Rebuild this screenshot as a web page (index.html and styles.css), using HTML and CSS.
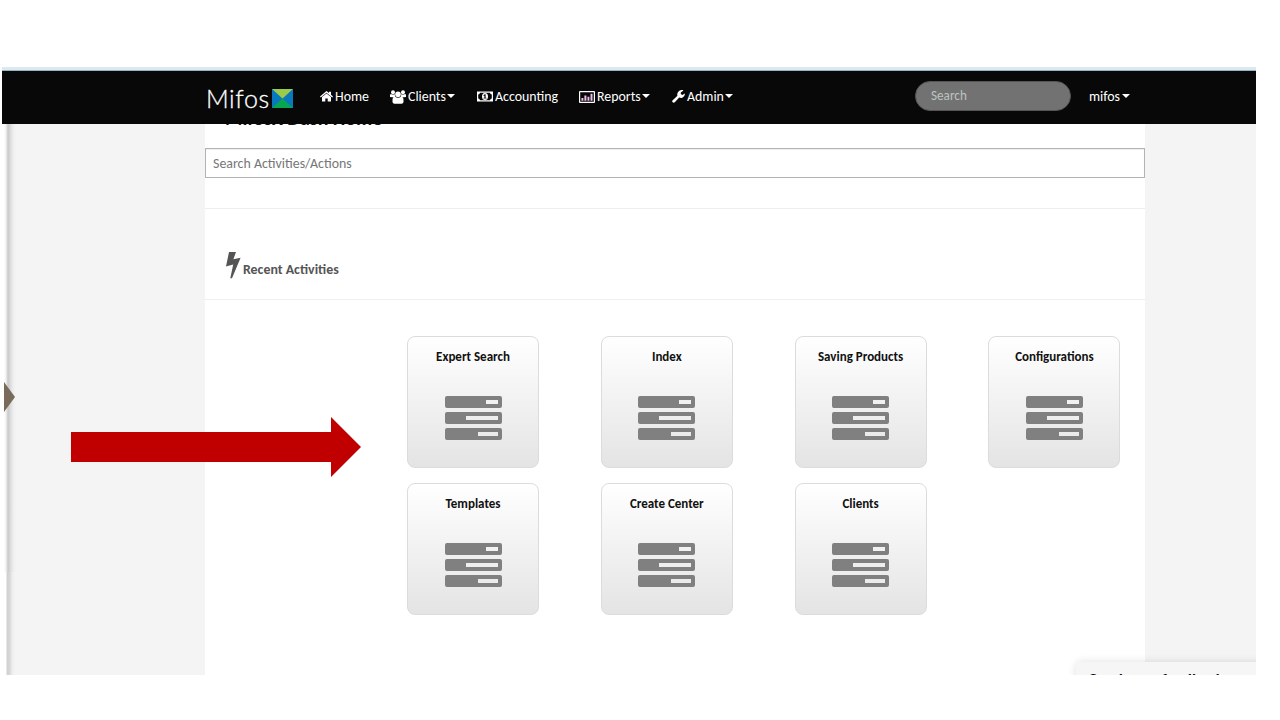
FILE: index.html
```
<!DOCTYPE html>
<html lang="en">
<head>
<meta charset="utf-8">
<title>Mifos X</title>
<link rel="stylesheet" href="styles.css">
</head>
<body>
<svg class="sprite" aria-hidden="true">
  <symbol id="tasks" viewBox="0 0 57 45">
    <path fill-rule="evenodd" d="M2 0H55Q57 0 57 2V10Q57 12 55 12H2Q0 12 0 10V2Q0 0 2 0ZM41 4V8H53V4ZM2 16H55Q57 16 57 18V26Q57 28 55 28H2Q0 28 0 26V18Q0 16 2 16ZM21 20V24H53V20ZM2 32H55Q57 32 57 34V42Q57 44 55 44H2Q0 44 0 42V34Q0 32 2 32ZM33 36V40H53V36Z"/>
  </symbol>
</svg>
<div class="window">
  <nav class="navbar">
    <a class="brand"><span class="brand-name">Mifos</span>
      <svg class="brand-mark" viewBox="0 0 20 18"><path fill="#0879bd" d="M0 0H20V18H0Z"/><path fill="#9ccb4b" d="M0 0H20L10 9Z"/><path fill="#08a651" d="M0 18L10 9L20 18Z"/></svg>
    </a>
    <a class="item home"><svg width="13" height="11" viewBox="0 0 13 11"><path d="M6.5 0L9 2.1V.7H11V3.8L13 5.5L12.2 6.4L6.5 1.8L.8 6.4L0 5.5Z"/><path d="M6.5 2.5L11 6.1V10.5H7.7V7.4H5.3V10.5H2V6.1Z"/></svg><span>Home</span></a>
    <a class="item clients"><svg width="16" height="14" viewBox="0 0 16 14"><circle cx="3" cy="2.2" r="2"/><circle cx="13" cy="2.2" r="2"/><circle cx="8" cy="4.3" r="2.8"/><path d="M0 7V5.2Q0 4 1 4Q3 5 4.7 4Q4.7 6.3 5.8 7.3H2ZM16 7V5.2Q16 4 15 4Q13 5 11.3 4Q11.3 6.3 10.2 7.3H14Z"/><path d="M2.5 12V10Q2.6 6.6 5 6.7Q8 8.8 11 6.7Q13.4 6.6 13.5 10V12Q13.4 13.8 11.5 13.8H4.5Q2.6 13.8 2.5 12Z"/></svg><span>Clients</span><i class="caret"></i></a>
    <a class="item accounting"><svg width="16" height="11" viewBox="0 0 16 11"><path fill-rule="evenodd" d="M0 .5H16V10.5H0ZM3 1.7Q2.8 3.2 1.2 3.4V7.6Q2.8 7.8 3 9.3H13Q13.2 7.8 14.8 7.6V3.4Q13.2 3.2 13 1.7Z"/><path fill-rule="evenodd" d="M8 2A3 3.5 0 0 1 8 9A3 3.5 0 0 1 8 2ZM7.7 3.3L6.3 4.4L6.8 5L7.4 4.7V6.8H6.5V7.6H9.5V6.8H8.6V3.3Z"/></svg><span>Accounting</span></a>
    <a class="item reports"><svg width="16" height="12" viewBox="0 0 16 12"><path fill-rule="evenodd" d="M1 0H15Q16 0 16 1V11Q16 12 15 12H1Q0 12 0 11V1Q0 0 1 0ZM1.2 1.2V10.8H14.8V1.2Z"/><path fill="#edbfe8" d="M2.4 7H4.4V9.7H2.4ZM5.4 4.5H7.4V9.7H5.4ZM8.5 5.8H10.4V9.7H8.5ZM11.5 2.7H13.5V9.7H11.5Z"/></svg><span>Reports</span><i class="caret"></i></a>
    <a class="item admin"><svg width="13" height="13" viewBox="0 0 13 13"><path fill-rule="evenodd" d="M12.8 3.5Q13.2 6.5 10.3 7.7Q8.8 8.2 7.2 7.5L2.8 12.3Q1.8 13.2.7 12.3Q-.4 11.2.7 10.2L5.4 5.8Q4.8 3.4 6.3 1.7Q8.1-.2 11-.1L11.2.8L8.8 2.4V4L10.3 4.9Z"/></svg><span>Admin</span><i class="caret"></i></a>
    <div class="search">Search</div>
    <a class="item user"><span>mifos</span><i class="caret"></i></a>
  </nav>
  <div class="body">
    <main class="content">
      <h1 class="title"><span>MifosX Dash Home</span></h1>
      <div class="filter"><span>Search Activities/Actions</span></div>
      <h2 class="section"><svg width="15" height="27" viewBox="0 0 15 27"><path d="M3 0H10L7.4 7.2L14.6 5.8L6 26.3H4.3L7.2 12.5L0 14.5Z"/></svg><span>Recent Activities</span></h2>
      <div class="cards">
        <a class="card"><span>Expert Search</span><svg><use href="#tasks"/></svg></a>
        <a class="card"><span>Index</span><svg><use href="#tasks"/></svg></a>
        <a class="card"><span>Saving Products</span><svg><use href="#tasks"/></svg></a>
        <a class="card"><span>Configurations</span><svg><use href="#tasks"/></svg></a>
        <a class="card"><span>Templates</span><svg><use href="#tasks"/></svg></a>
        <a class="card"><span>Create Center</span><svg><use href="#tasks"/></svg></a>
        <a class="card"><span>Clients</span><svg><use href="#tasks"/></svg></a>
      </div>
    </main>
    <div class="edge"></div>
    <div class="edge-low"></div>
    <div class="drawer"></div>
    <div class="feedback">Send your feedback</div>
  </div>
</div>
<svg class="pointer" viewBox="0 0 290 60"><path d="M0 15H260V0L290 30L260 60V45H0Z"/></svg>
</body>
</html>
```
FILE: styles.css
```
* { box-sizing: border-box; }
body { margin: 0; width: 1280px; height: 720px; overflow: hidden; background: #fff; font-family: Carlito, Lato, sans-serif; font-size: 13.9px; position: relative; display: flow-root; }
.sprite { display: none; }
.window { width: 1254px; height: 608px; margin: 67px 0 0 2px; overflow: hidden; display: flex; flex-direction: column; border-top: 3px solid #dbe9f2; }
.navbar { height: 54px; flex: none; display: flex; background: #080808; border-top: 1px solid #9ab5c2; padding-left: 205px; color: #fff; position: relative; z-index: 2; }
.brand { width: 113px; display: flex; align-items: flex-start; }
.brand-name { font-family: Lato, sans-serif; font-weight: 300; font-size: 25px; letter-spacing: .6px; line-height: 30px; width: 65px; margin: 12px 1px 0 -1px; white-space: nowrap; -webkit-text-stroke: .3px #fff; }
.brand-mark { width: 21px; height: 19px; margin-top: 18px; }
.item { display: flex; align-items: center; height: 51px; white-space: nowrap; }
.item svg { fill: #fff; flex: none; margin-right: 2px; }
.item span { line-height: 16px; }
.home { width: 70px; }
.clients { width: 87px; }
.accounting { width: 102px; }
.reports { width: 93px; }
.admin { width: 243px; }
.caret { border: 4px solid transparent; border-top-color: #fff; border-bottom: 0; margin: -1px 0 0 1px; }
.user .caret { margin-left: 2px; }
.search { width: 156px; height: 30px; margin: 10px 18px 0 0; border-radius: 15px; border: 1px solid #555; background: #727272; color: #bdc3c3; font-size: 13.2px; line-height: 28px; padding-left: 15px; }
.body { flex: 1; min-height: 0; position: relative; background: #f4f4f4; padding-left: 203px; overflow: hidden; }
.content { width: 940px; height: 551px; background: #fff; display: flow-root; }
.title { margin: 0; height: 24px; padding-left: 20px; font-size: 19.9px; line-height: 20px; color: #111; display: flex; }
.title span { margin-top: -16px; }
.filter { height: 30px; border: 1px solid #b3b3b3; box-shadow: inset 0 1px 1px #eee; line-height: 29px; padding-left: 7px; color: #777; }
.section { margin: 30px 0 0; height: 92px; border: solid #eee; border-width: 1px 0; padding: 43px 0 0 21px; display: flex; font-size: 13.9px; color: #555; }
.section svg { fill: #555; margin-right: 2px; }
.section span { line-height: 16px; margin-top: 10px; }
.cards { display: grid; grid-template-columns: repeat(4, 132px); column-gap: 61.8px; row-gap: 15px; padding: 36px 0 0 202px; }
.card { height: 132px; border: 1px solid #dcdcdc; border-radius: 8px; background: linear-gradient(#fff, #e4e4e4); display: flex; flex-direction: column; align-items: center; padding-top: 12px; color: #111; font-size: 13px; font-weight: 700; line-height: 16px; white-space: nowrap; }
.card svg { width: 57px; height: 45px; margin-top: 31px; fill: #808080; }
.edge { position: absolute; left: 0; top: 0; width: 14px; height: 448px; background: linear-gradient(90deg, #fff 2px, #f0f0f0 4px, #c9c9c9 6px, #d8d8d8 8px, #ededed 11px, #f4f4f4 14px); }
.edge-low { position: absolute; left: 0; top: 448px; width: 14px; bottom: 0; background: linear-gradient(90deg, #fff 4px, #d0d0d0 5px, #d8d8d8 8px, #ededed 10px, #f4f4f4 13px); }
.drawer { position: absolute; left: 2px; top: 258px; border: solid transparent; border-width: 15px 0 15px 11px; border-left-color: #796b5b; }
.feedback { position: absolute; left: 1074px; top: 538px; width: 190px; height: 40px; padding: 7px 0 0 13px; border-radius: 5px 0 0 0; background: #f6f6f6; box-shadow: 0 0 8px rgba(0,0,0,.13); font-size: 16.5px; font-weight: 700; line-height: 20px; color: #111; white-space: nowrap; }
.pointer { position: absolute; left: 71px; top: 417px; width: 290px; height: 60px; fill: #c00000; }
```
